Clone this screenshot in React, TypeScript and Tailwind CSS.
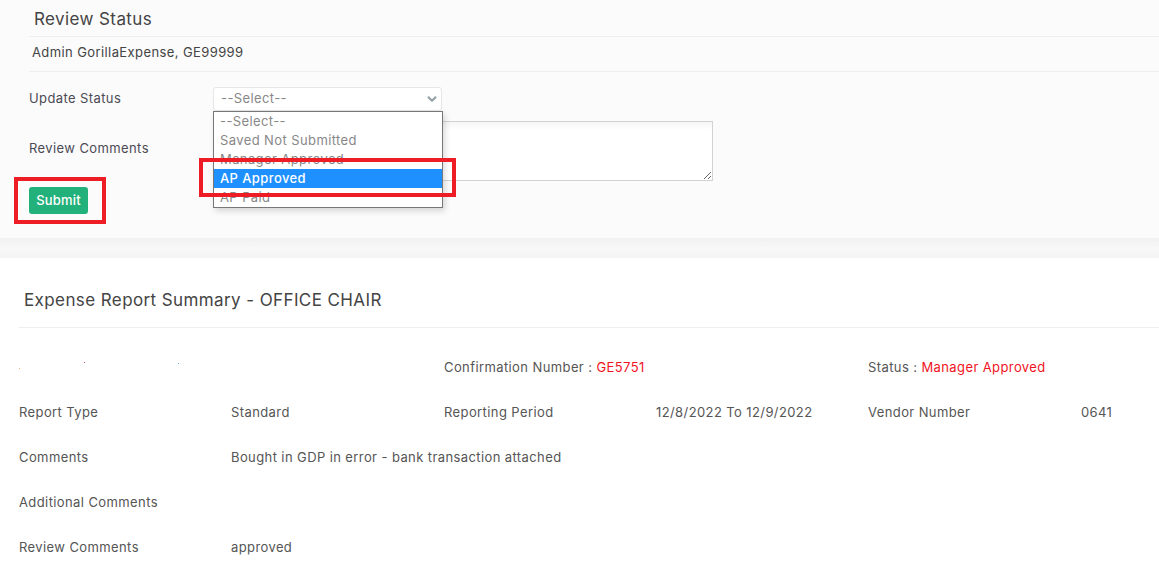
import { ChevronDown } from 'lucide-react';

const font = { fontFamily: 'Inter, "Noto Sans", sans-serif' };

const options = ['--Select--', 'Saved Not Submitted', 'Manager Approved', 'AP Approved', 'AP Paid'];

function Cell({ children, className = '' }: { children?: React.ReactNode; className?: string }) {
  return <div className={`text-[13px] text-[#555] ${className}`}>{children}</div>;
}

export default function App() {
  return (
    <div className="w-[1159px] h-[570px] overflow-hidden bg-white relative tracking-[0.4px]" style={font}>
      {/* review status panel */}
      <div className="bg-[#fbfbfb] h-[238px] relative">
        <div className="ml-[29px] h-[37px] border-b border-[#eeeeee] flex items-center pl-[5px] pt-[3px] text-[17px] text-[#444]">
          Review Status
        </div>
        <div className="ml-[29px] h-[35px] border-b border-[#eeeeee] flex items-center pl-[3px] pb-[2px] text-[13px] text-[#444]">
          Admin GorillaExpense, GE99999
        </div>
        <div className="pl-[29px] pt-[15px] flex flex-col">
          <div className="flex items-center h-[24px]">
            <div className="w-[184px] text-[13px] text-[#4c4a55]">Update Status</div>
            <div className="w-[229px] h-[24px] border border-[#e6e6e6] rounded-[3px] bg-white flex items-center justify-between pl-[7px] pr-[2px] text-[13px] text-[#888]">
              <span>--Select--</span>
              <ChevronDown size={14} strokeWidth={3.5} className="text-[#93a0a6]" />
            </div>
          </div>
          <div className="flex items-start mt-[10px] h-[60px]">
            <div className="w-[184px] text-[13px] text-[#4c4a55] pt-[18px]">Review Comments</div>
            <textarea className="w-[500px] h-[60px] border border-[#d2d2d2] bg-white outline-none resize-y shadow-[inset_0_8px_8px_-6px_rgba(0,0,0,0.06)]" />
          </div>
          <div className="mt-[6px]">
            <button className="h-[27px] w-[59px] rounded-[3px] bg-[#22b07b] text-white text-[13px] font-medium tracking-[0.2px]">
              Submit
            </button>
          </div>
        </div>

        {/* open select list */}
        <div className="absolute top-[111px] left-[213px] w-[230px] border border-[#777] bg-white shadow-[2px_3px_6px_rgba(0,0,0,0.15)]">
          {options.map((o) => (
            <div
              key={o}
              className={`h-[19px] flex items-center pl-[6px] text-[13px] ${
                o === 'AP Approved' ? 'bg-[#1e90ff] text-white font-medium' : 'text-[#888]'
              }`}
            >
              {o}
            </div>
          ))}
        </div>

        {/* annotation boxes */}
        <div className="absolute left-[14px] top-[177px] w-[92px] h-[47px] border-[4px] border-[#ee1c25]" />
        <div className="absolute left-[199px] top-[158px] w-[257px] h-[39px] border-[4px] border-[#ee1c25]" />
      </div>

      <div className="h-[20px] bg-gradient-to-b from-[#f1f1f1] via-[#f8f8f8] to-[#f4f4f4]" />

      {/* summary */}
      <div className="bg-white">
        <div className="ml-[19px] h-[70px] border-b border-[#eeeeee] flex items-center pl-[5px] pt-[16px] text-[17px] text-[#444]">
          Expense Report Summary - OFFICE CHAIR
        </div>
        <div className="pl-[19px] pt-[17px] grid grid-cols-[212px_213px_212px_212px_213px_212px] auto-rows-[45px] items-center">
          <Cell className="relative h-full">
            <span className="absolute left-0 top-[23px] w-[1px] h-[1px] bg-[#f5b76b]" />
            <span className="absolute left-[65px] top-[17px] w-[1px] h-[1px] bg-[#c9607a]" />
            <span className="absolute left-[159px] top-[18px] w-[1px] h-[1px] bg-[#6aaee0]" />
          </Cell>
          <Cell />
          <Cell className="col-span-2">
            Confirmation Number : <span className="text-[#f0141e]">GE5751</span>
          </Cell>
          <Cell className="col-span-2">
            Status : <span className="text-[#f0141e]">Manager Approved</span>
          </Cell>

          <Cell>Report Type</Cell>
          <Cell>Standard</Cell>
          <Cell>Reporting Period</Cell>
          <Cell>12/8/2022 To 12/9/2022</Cell>
          <Cell>Vendor Number</Cell>
          <Cell>0641</Cell>

          <Cell>Comments</Cell>
          <Cell className="col-span-5">Bought in GDP in error - bank transaction attached</Cell>

          <Cell className="col-span-6">Additional Comments</Cell>

          <Cell>Review Comments</Cell>
          <Cell className="col-span-5">approved</Cell>
        </div>
      </div>
    </div>
  );
}
